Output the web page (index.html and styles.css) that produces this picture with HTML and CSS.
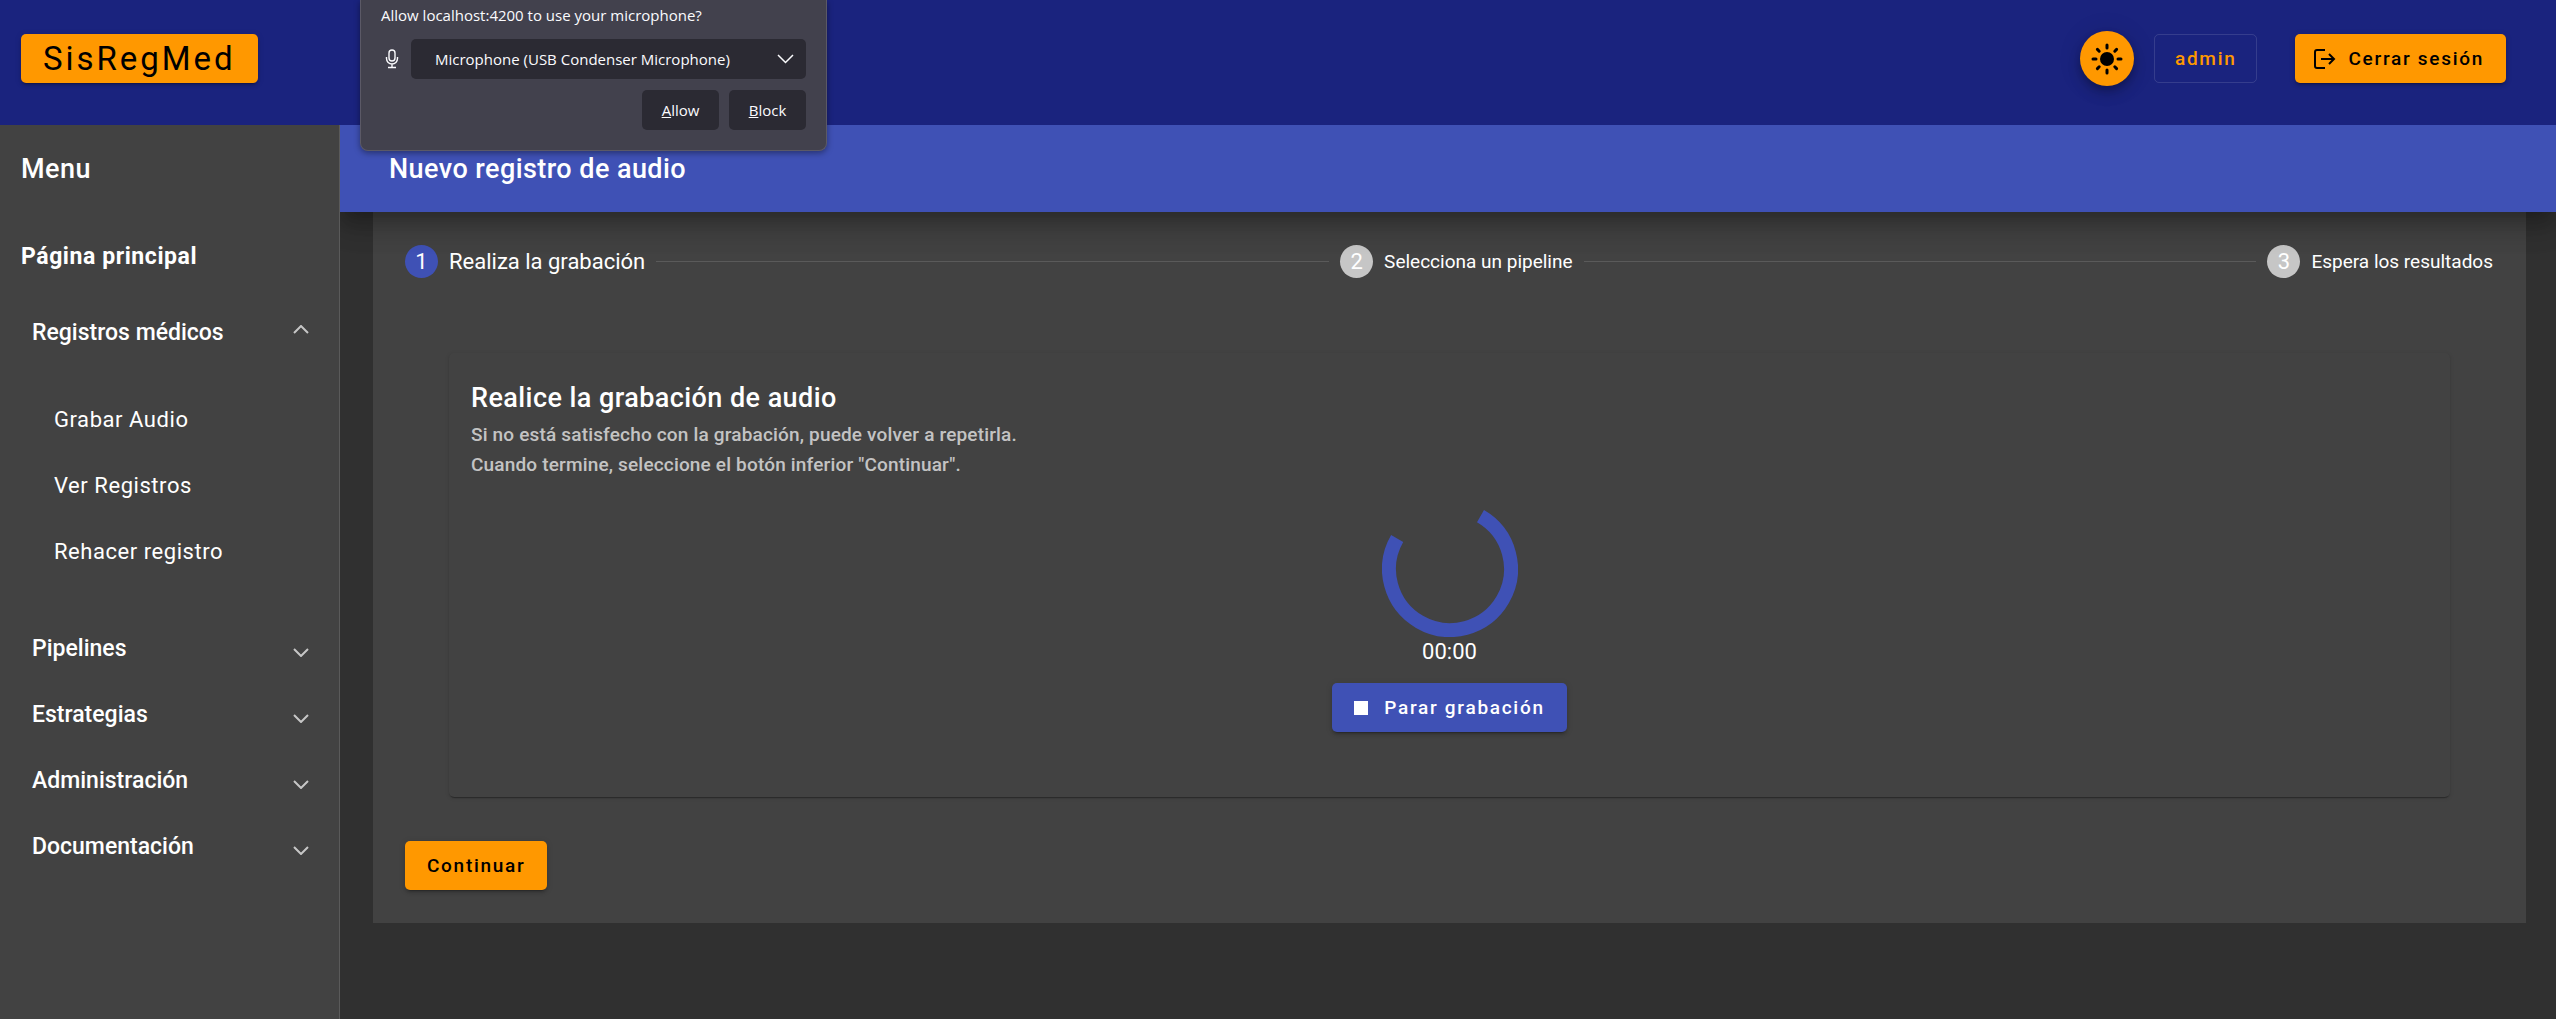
FILE: index.html
```html
<!DOCTYPE html>
<html lang="es">
<head>
  <meta charset="utf-8">
  <meta name="viewport" content="width=device-width, initial-scale=1">
  <title>SisRegMed</title>
  <link rel="stylesheet" href="styles.css">
</head>
<body>
  <header class="topbar">
    <button class="btn btn-accent btn-brand" type="button">SisRegMed</button>
    <div class="topbar-actions">
      <button class="fab" type="button" aria-label="Cambiar tema">
        <svg width="32" height="32" viewBox="0 0 32 32" aria-hidden="true">
          <circle cx="16" cy="16" r="7"/>
          <g stroke="currentColor" stroke-width="3" stroke-linecap="round">
            <path d="M16 2v3M16 27v3M2 16h3M27 16h3M6.400 6.400l1.800 1.800M23.800 23.800l1.800 1.800M6.400 25.600l1.800-1.800M23.800 8.200l1.800-1.800"/>
          </g>
        </svg>
      </button>
      <button class="btn btn-outline" type="button">admin</button>
      <button class="btn btn-accent btn-logout" type="button">
        <svg width="22" height="20" viewBox="0 0 22 20" fill="none" stroke="currentColor" stroke-width="2" aria-hidden="true">
          <path d="M11 1H3Q1 1 1 3v14q0 2 2 2h8M7 10h13M15 5l5 5-5 5"/>
        </svg>
        Cerrar sesión
      </button>
    </div>
  </header>

  <div class="layout">
    <nav class="sidebar" aria-label="Menu">
      <h2 class="sidebar-title">Menu</h2>
      <a class="home-link" href="#">Página principal</a>
      <button class="group" type="button" aria-expanded="true">Registros médicos
        <svg class="chevron" width="16" height="16" viewBox="0 0 16 16" aria-hidden="true"><path d="M1 8l7 7 7-7"/></svg>
      </button>
      <div class="group-items">
        <a href="#">Grabar Audio</a>
        <a href="#">Ver Registros</a>
        <a href="#">Rehacer registro</a>
      </div>
      <button class="group" type="button" aria-expanded="false">Pipelines
        <svg class="chevron" width="16" height="16" viewBox="0 0 16 16" aria-hidden="true"><path d="M1 8l7 7 7-7"/></svg>
      </button>
      <button class="group" type="button" aria-expanded="false">Estrategias
        <svg class="chevron" width="16" height="16" viewBox="0 0 16 16" aria-hidden="true"><path d="M1 8l7 7 7-7"/></svg>
      </button>
      <button class="group" type="button" aria-expanded="false">Administración
        <svg class="chevron" width="16" height="16" viewBox="0 0 16 16" aria-hidden="true"><path d="M1 8l7 7 7-7"/></svg>
      </button>
      <button class="group" type="button" aria-expanded="false">Documentación
        <svg class="chevron" width="16" height="16" viewBox="0 0 16 16" aria-hidden="true"><path d="M1 8l7 7 7-7"/></svg>
      </button>
    </nav>

    <main class="content">
      <h1 class="page-title">Nuevo registro de audio</h1>
      <section class="stepper">
        <ol class="steps">
          <li class="step step-active"><span class="step-number">1</span>Realiza la grabación</li>
          <li class="step"><span class="step-number">2</span>Selecciona un pipeline</li>
          <li class="step"><span class="step-number">3</span>Espera los resultados</li>
        </ol>
        <article class="card">
          <h2 class="card-title">Realice la grabación de audio</h2>
          <p class="card-subtitle">Si no está satisfecho con la grabación, puede volver a repetirla.<br>Cuando termine, seleccione el botón inferior "Continuar".</p>
          <div class="recorder">
            <svg class="spinner" width="136" height="136" viewBox="0 0 136 136" role="img" aria-label="Grabando">
              <path d="M98.500 15.172A61 61 0 1 1 15.172 37.500"/>
            </svg>
            <span class="timer">00:00</span>
            <button class="btn btn-primary" type="button"><span class="stop-icon"></span>Parar grabación</button>
          </div>
        </article>
        <button class="btn btn-accent btn-next" type="button">Continuar</button>
      </section>
    </main>
  </div>

  <div class="permission" role="dialog" aria-labelledby="permission-title">
    <label class="permission-title" id="permission-title" for="microphone">Allow localhost:4200 to use your microphone?</label>
    <div class="permission-device">
      <svg width="14" height="20" viewBox="0 0 14 20" fill="none" stroke="currentColor" stroke-width="1.400" aria-hidden="true">
        <rect x="4" y="1" width="6" height="11" rx="3"/>
        <path d="M1.500 8v1.500a5.500 5.500 0 0 0 11 0V8M7 15v3.500M3 18.500h8"/>
      </svg>
      <div class="select-wrap">
        <select id="microphone"><option>Microphone (USB Condenser Microphone)</option></select>
        <svg class="select-arrow" width="17" height="10" viewBox="0 0 17 10" fill="none" stroke="currentColor" stroke-width="1.500" aria-hidden="true"><path d="M1 1l7.500 7.500L16 1"/></svg>
      </div>
    </div>
    <div class="permission-actions">
      <button type="button"><u>A</u>llow</button>
      <button type="button"><u>B</u>lock</button>
    </div>
  </div>
</body>
</html>
```
FILE: styles.css
```css
:root {
  --navy: #1a237e;
  --indigo: #3f51b5;
  --amber: #ff9800;
  --surface: #424242;
  --background: #303030;
  --line: rgba(255, 255, 255, 0.12);
  --lift: 0 4px 1px -3px rgba(0, 0, 0, 0.2), 0 3px 3px rgba(0, 0, 0, 0.14), 0 1px 7px rgba(0, 0, 0, 0.12);
}

* {
  box-sizing: border-box;
}

body {
  display: flex;
  flex-direction: column;
  min-height: 100vh;
  margin: 0;
  background: var(--background);
  color: #fff;
  font: 400 22px/30px Roboto, sans-serif;
}

button,
select {
  border: 0;
  color: inherit;
  font: inherit;
  cursor: pointer;
}

a {
  color: inherit;
  text-decoration: none;
}

h1,
h2,
p,
ol {
  margin: 0;
  padding: 0;
}

/* Buttons */

.btn {
  display: inline-flex;
  align-items: center;
  height: 49px;
  padding: 0 22px;
  border-radius: 5px;
  font-size: 19px;
  font-weight: 500;
  letter-spacing: 0.09em;
  white-space: nowrap;
}

.btn-accent {
  background: var(--amber);
  color: #000;
  box-shadow: var(--lift);
}

.btn-primary {
  gap: 16px;
  background: var(--indigo);
  box-shadow: var(--lift);
}

.btn-outline {
  padding: 0 20px;
  border: 1px solid var(--line);
  background: none;
  color: var(--amber);
}

.btn-brand {
  font-size: 33px;
  font-weight: 400;
}

.fab {
  display: grid;
  place-items: center;
  width: 54px;
  height: 55px;
  padding: 0;
  border-radius: 50%;
  background: var(--amber);
  color: #000;
  box-shadow: 0 4px 7px -1px rgba(0, 0, 0, 0.2), 0 8px 14px rgba(0, 0, 0, 0.14), 0 1px 24px rgba(0, 0, 0, 0.12);
}

/* Header */

.topbar {
  display: flex;
  justify-content: space-between;
  align-items: center;
  padding: 31px 50px 39px 21px;
  background: var(--navy);
}

.topbar-actions {
  display: flex;
  align-items: center;
  gap: 20px;
}

.btn-logout {
  gap: 12px;
  margin-left: 18px;
  padding: 0 22px 0 19px;
}

.layout {
  display: flex;
  flex: 1;
}

/* Sidebar */

.sidebar {
  flex: 0 0 340px;
  padding: 0 0 44px 21px;
  border-right: 1px solid #5a5a5a;
  background: var(--surface);
}

.sidebar-title {
  padding-top: 2px;
  font-size: 27px;
  font-weight: 500;
  letter-spacing: 0.016em;
  line-height: 85px;
}

.home-link {
  display: block;
  padding: 12px 0 10px;
  font-size: 23px;
  font-weight: 700;
  letter-spacing: 0.025em;
  line-height: 66px;
}

.group {
  display: flex;
  justify-content: space-between;
  align-items: center;
  width: 100%;
  height: 66px;
  padding: 0 30px 0 11px;
  background: none;
  font-size: 23px;
  font-weight: 500;
}

.chevron {
  fill: none;
  stroke: rgba(255, 255, 255, 0.7);
  stroke-width: 2;
}

.group[aria-expanded="true"] .chevron {
  transform: rotate(180deg);
}

.group-items {
  padding: 21px 0 31px 33px;
}

.group-items a {
  display: block;
  line-height: 66px;
  letter-spacing: 0.025em;
}

/* Main area */

.content {
  flex: 1;
  min-width: 0;
  padding-bottom: 44px;
}

.page-title {
  position: relative;
  padding: 2px 0 0 49px;
  background: var(--indigo);
  box-shadow: 0 11px 14px -7px rgba(0, 0, 0, 0.2), 0 16px 24px 2px rgba(0, 0, 0, 0.14), 0 6px 30px 5px rgba(0, 0, 0, 0.12);
  clip-path: inset(0 0 -60px 0);
  font-size: 27px;
  font-weight: 500;
  letter-spacing: 0.016em;
  line-height: 85px;
}

.stepper {
  margin: 0 30px 0 33px;
  padding: 33px 33px 33px 32px;
  background: var(--surface);
}

.steps {
  display: flex;
  list-style: none;
}

.step {
  display: flex;
  align-items: center;
  gap: 11px;
  font-size: 19px;
  line-height: 33px;
  white-space: nowrap;
}

.step:not(:last-child) {
  flex: 1 1 auto;
  margin-right: 11px;
}

.step:not(:last-child)::after {
  content: "";
  flex: 1;
  border-top: 1px solid #5a5a5a;
}

.step-active {
  font-size: 22px;
}

.step-number {
  width: 33px;
  border-radius: 50%;
  background: #c6c6c6;
  font-size: 22px;
  text-align: center;
}

.step-active .step-number {
  background: var(--indigo);
}

.card {
  margin: 75px 43px 44px 44px;
  padding: 29px 22px 65px;
  border-radius: 5px;
  box-shadow: 0 3px 1px -2px rgba(0, 0, 0, 0.2), 0 1px 1px rgba(0, 0, 0, 0.14), 0 1px 4px rgba(0, 0, 0, 0.12);
}

.card-title {
  font-size: 27px;
  font-weight: 500;
  letter-spacing: 0.016em;
  line-height: 33px;
}

.card-subtitle {
  padding-top: 5px;
  color: rgba(255, 255, 255, 0.7);
  font-size: 19px;
  font-weight: 500;
  letter-spacing: 0.009em;
}

.recorder {
  display: flex;
  flex-direction: column;
  align-items: center;
  padding-top: 21px;
}

.spinner {
  fill: none;
  stroke: var(--indigo);
  stroke-width: 14;
}

.timer {
  margin-bottom: 16px;
}

.stop-icon {
  width: 14px;
  height: 14px;
  background: #fff;
}

/* Browser permission prompt */

.permission {
  position: absolute;
  top: 0;
  left: 360px;
  z-index: 2;
  width: 467px;
  padding: 5px 20px 20px;
  border: 1px solid #5b5966;
  border-top: 0;
  border-radius: 0 0 8px 8px;
  background: #42414d;
  box-shadow: 0 2px 6px rgba(0, 0, 0, 0.4);
  color: #fbfbfe;
  font: 400 15px/20px "Open Sans", sans-serif;
}

.permission-title {
  display: block;
}

.permission-device {
  display: flex;
  align-items: center;
  gap: 12px;
  margin: 14px 0 11px;
  padding-left: 4px;
}

.select-wrap {
  position: relative;
  flex: 1;
}

.select-wrap select {
  display: block;
  width: 100%;
  height: 40px;
  padding: 0 24px;
  border-radius: 5px;
  background: #2b2a33;
  appearance: none;
}

.select-arrow {
  position: absolute;
  top: 15px;
  right: 12px;
  pointer-events: none;
}

.permission-actions {
  display: flex;
  justify-content: flex-end;
  gap: 10px;
}

.permission-actions button {
  width: 77px;
  height: 40px;
  padding: 0;
  border-radius: 5px;
  background: #2b2a33;
}
```
